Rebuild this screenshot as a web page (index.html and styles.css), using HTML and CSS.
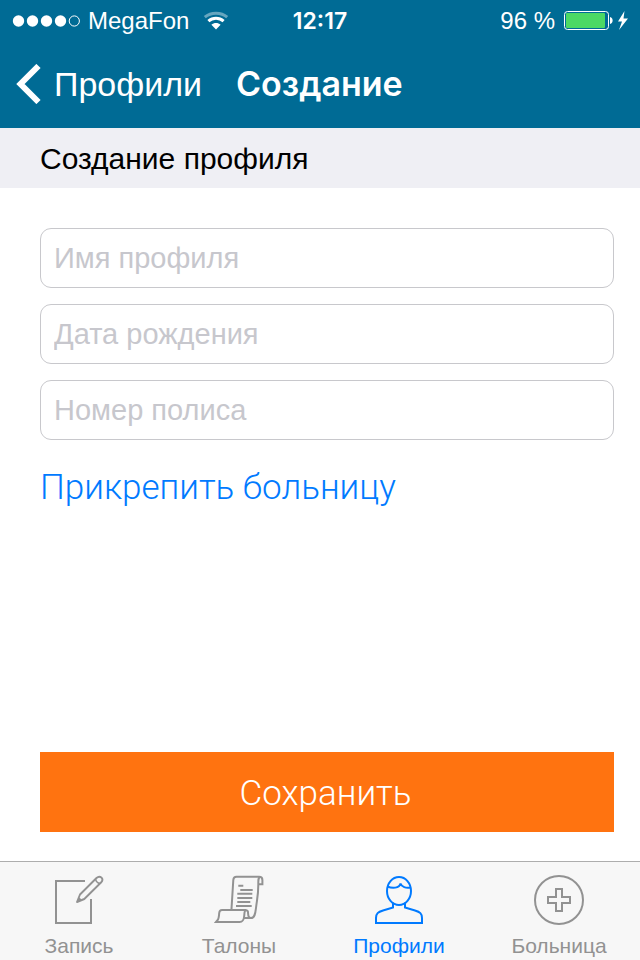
FILE: index.html
```html
<!DOCTYPE html>
<html lang="ru">
<head>
<meta charset="utf-8">
<meta name="viewport" content="width=device-width, initial-scale=1">
<title>Создание профиля</title>
<link rel="stylesheet" href="styles.css">
</head>
<body>
<header class="top">
  <div class="status">
    <div class="carrier">
      <svg class="signal" width="68" height="12" viewBox="0 0 68 12" aria-hidden="true">
        <g fill="#fff"><circle cx="6.500" cy="6" r="5.700"/><circle cx="20.500" cy="6" r="5.700"/><circle cx="34.500" cy="6" r="5.700"/><circle cx="48.500" cy="6" r="5.700"/></g>
        <circle cx="62.300" cy="6" r="5.100" fill="none" stroke="#fff"/>
      </svg>
      <span>MegaFon</span>
      <svg class="wifi" width="26" height="20" viewBox="0 0 26 20" fill="none" stroke="#fff" stroke-width="3" aria-hidden="true">
        <path d="M1.800 6.200C8 .8 18 .8 24.200 6.200" opacity=".4"/>
        <path d="M5.400 10.200C9.800 6.300 16.200 6.300 20.600 10.200"/>
        <path d="M8.400 13.800C11 11.300 15 11.300 17.600 13.800L13 18.500z" fill="#fff" stroke="none"/>
      </svg>
    </div>
    <time class="clock">12:17</time>
    <div class="power">
      <span>96 %</span>
      <svg width="65" height="20" viewBox="0 0 65 20" aria-hidden="true">
        <rect x="1.500" y=".5" width="44" height="18" rx="3" fill="none" stroke="#fff"/>
        <rect x="3" y="2" width="39" height="15" rx="1" fill="#4cd964"/>
        <path d="M47 6C50.500 6.500 50.500 12.500 47 13z" fill="#fff"/>
        <path d="M61.500 0L55 10.500H59L56 19L65 7.500H60.500z" fill="#fff"/>
      </svg>
    </div>
  </div>
  <nav class="nav">
    <a class="back" href="#profiles">
      <svg width="26" height="40" viewBox="0 0 26 40" fill="none" stroke="#fff" stroke-width="6" aria-hidden="true"><path d="M22.500 2L4.500 20L22.500 38"/></svg>
      <span>Профили</span>
    </a>
    <h1 class="title">Создание</h1>
  </nav>
</header>
<main class="main">
  <h2 class="section">Создание профиля</h2>
  <form class="form">
    <input class="field" type="text" name="name" aria-label="Имя профиля" placeholder="Имя профиля">
    <input class="field" type="text" name="birthday" aria-label="Дата рождения" placeholder="Дата рождения">
    <input class="field" type="text" name="policy" aria-label="Номер полиса" placeholder="Номер полиса">
    <a class="attach" href="#hospital">Прикрепить больницу</a>
    <button class="save" type="button">Сохранить</button>
  </form>
</main>
<nav class="tabs">
  <a class="tab" href="#record">
    <svg class="icon" viewBox="0 0 50 50" aria-hidden="true">
      <path d="M31 6H2V48H37V24"/>
      <path d="M23 27L26 19.500L42.500 3C44.300 1.300 46.300 1.500 47.500 2.700C48.700 3.900 48.700 5.700 47 7.500L30.300 24ZM23 27L26.500 23.500" stroke-width="1.900" stroke-linejoin="round"/>
      <path d="M41.500 4C42 6.500 43.500 8 46 8.500" stroke-width="1.400"/>
    </svg>
    <span>Запись</span>
  </a>
  <a class="tab" href="#tickets">
    <svg class="icon" viewBox="0 0 50 50" aria-hidden="true">
      <path d="M17.500 34L19.300 5C19.500 2.500 20.300 1.800 22.500 1.800H45C47.500 1.800 48.400 2.500 48.400 5V9.300H44.300"/>
      <path d="M46 2C44.300 3 44.300 4 44.300 8C44.500 20 42.800 25 42 33C41.300 39 40.500 43 37 43C33.500 43 34.300 39 34 37C33.700 35.500 33 35 31 35H8C6 35 5.400 36 5.200 38C5 42 4.600 44 3.500 45.200L2 47H25.500C30 47 30 43 30.300 40C30.400 37 30.500 35.500 32 35M29.500 43H37"/>
      <path d="M24.300 10.700H29.300M26.300 15H38.700M23.300 18.800H38.300M23.300 23H38.300M23.300 27H36.300M22 31H37.700"/>
    </svg>
    <span>Талоны</span>
  </a>
  <a class="tab active" href="#profiles" aria-current="page">
    <svg class="icon" viewBox="0 0 50 50" aria-hidden="true">
      <ellipse cx="25" cy="16" rx="12" ry="14"/>
      <path d="M13.500 11.500C18 13.500 25.500 13.500 26.500 8.500C27.500 12 32 13.500 36.500 12.500"/>
      <path d="M19 27.500V32.500L9 35.500C4 37 2 38.500 2 43V48H48V43C48 38.500 46 37 41 35.500L31 32.500V27.500"/>
    </svg>
    <span>Профили</span>
  </a>
  <a class="tab" href="#hospitals">
    <svg class="icon" viewBox="0 0 50 50" aria-hidden="true">
      <circle cx="25" cy="25" r="24"/>
      <path d="M22 14H28V22H36V28H28V36H22V28H14V22H22Z"/>
    </svg>
    <span>Больница</span>
  </a>
</nav>
</body>
</html>
```
FILE: styles.css
```css
* { box-sizing: border-box; }

body {
  margin: 0;
  min-height: 100vh;
  display: flex;
  flex-direction: column;
  background: #fff;
  color: #000;
  font-family: "Liberation Sans", Arial, sans-serif;
}

a { color: inherit; text-decoration: none; }
svg { display: block; flex: none; }

.top { background: #006b95; color: #fff; }

.status {
  display: grid;
  grid-template-columns: 1fr auto 1fr;
  align-items: center;
  height: 40px;
  padding: 2px 12px 0;
  font-size: 24px;
  line-height: 28px;
}
.carrier, .power { display: flex; align-items: center; gap: 8px; }
.power { justify-content: flex-end; }
.wifi { margin-left: 6px; }
.clock { font-family: Inter, sans-serif; font-size: 23px; font-weight: 600; }

.nav { display: flex; align-items: center; height: 88px; padding: 0 16px; gap: 34px; }
.back { display: flex; align-items: center; gap: 12px; font-size: 34px; line-height: 40px; }
.title {
  margin: 0;
  font-family: Inter, sans-serif;
  font-size: 34px;
  line-height: 40px;
  font-weight: 600;
}

.main { flex: 1; display: flex; flex-direction: column; }
.section {
  margin: 0;
  padding: 11px 40px 9px;
  background: #efeff4;
  font-size: 30px;
  line-height: 40px;
  font-weight: 400;
}
.form {
  flex: 1;
  display: flex;
  flex-direction: column;
  gap: 16px;
  padding: 40px 26px 29px 40px;
}
.field {
  width: 100%;
  height: 60px;
  padding: 0 13px;
  border: 1px solid #c8c8cc;
  border-radius: 11px;
  background: #fff;
  font: 29px "Liberation Sans", Arial, sans-serif;
}
.field::placeholder { color: #c7c7cd; opacity: 1; }
.attach {
  align-self: flex-start;
  margin-top: 8px;
  color: #007aff;
  font-family: Roboto, sans-serif;
  font-weight: 300;
  font-size: 35px;
  line-height: 48px;
}
.save {
  margin-top: auto;
  height: 80px;
  padding: 3px 6px 0 3px;
  border: 0;
  background: #ff7310;
  color: #fff;
  font-family: Roboto, sans-serif;
  font-weight: 300;
  font-size: 35px;
}

.tabs {
  display: grid;
  grid-template-columns: repeat(4, 1fr);
  height: 99px;
  border-top: 1px solid #adadad;
  background: #f7f7f7;
  color: #929292;
  font-size: 21px;
  line-height: 24px;
}
.tab {
  display: flex;
  flex-direction: column;
  align-items: center;
  gap: 9px;
  padding: 13px 2px 0 0;
}
.active { color: #007aff; }
.icon { width: 50px; height: 50px; fill: none; stroke: currentColor; stroke-width: 2; }
```
